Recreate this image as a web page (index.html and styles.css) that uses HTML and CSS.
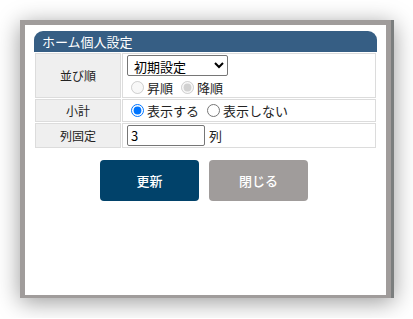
FILE: index.html
```html
<!DOCTYPE html>
<html lang="ja">
<head>
  <meta charset="UTF-8">
  <title>ホーム個人設定</title>
  <link rel="stylesheet" href="styles.css">
</head>
<body>
  <div class="dialog">
    <div class="panel">
      <div class="panel-title">ホーム個人設定</div>
      <div class="settings">
        <div class="label row-sort">並び順</div>
        <div class="value row-sort">
          <select class="sort-select">
            <option>初期設定</option>
          </select>
          <div class="radios">
            <label><input type="radio" name="order" disabled>昇順</label>
            <label><input type="radio" name="order" checked disabled>降順</label>
          </div>
        </div>
        <div class="label">小計</div>
        <div class="value">
          <div class="radios">
            <label><input type="radio" name="subtotal" checked>表示する</label>
            <label><input type="radio" name="subtotal">表示しない</label>
          </div>
        </div>
        <div class="label">列固定</div>
        <div class="value">
          <input class="col-input" type="text" value="3"> 列
        </div>
      </div>
      <div class="actions">
        <button class="btn btn-update">更新</button>
        <button class="btn btn-close">閉じる</button>
      </div>
    </div>
  </div>
</body>
</html>
```

FILE: styles.css
```css
/* page */
body {
  margin: 0;
  padding: 20px;
  background: #fff;
  font-family: "Noto Sans CJK JP", "Noto Sans", sans-serif;
  font-size: 12px;
  color: #222;
}

.dialog {
  width: 361px;
  height: 270px;
  background: #a09c9b;
  padding: 5px 5px 3px 5px;
  border-right: 3px solid #7b7e7e;
  box-shadow: 0 4px 22px rgba(0, 0, 0, 0.4);
}

.panel {
  height: 100%;
  background: #fff;
  padding: 6px 9px 0 9px;
  box-sizing: border-box;
}

.panel-title {
  height: 21px;
  line-height: 21px;
  background: #365e84;
  color: #fff;
  font-size: 13px;
  padding-left: 8px;
  border-radius: 9px 9px 0 0;
}

/* settings table */
.settings {
  display: grid;
  grid-template-columns: 86px 1fr;
  grid-template-rows: 45px 23px 25px;
  gap: 1px 1px;
  padding: 1px;
}

.label,
.value {
  border: 1px solid #dcdcdc;
  display: flex;
  align-items: center;
}

.label {
  background: #efefef;
  justify-content: center;
}

.value {
  padding-left: 4px;
}

.value.row-sort {
  flex-direction: column;
  align-items: flex-start;
  justify-content: flex-start;
  padding-top: 1px;
}

.value.row-sort .radios {
  margin-top: 2px;
}

.sort-select {
  width: 101px;
  height: 21px;
  font-family: inherit;
  font-size: 13px;
  border: 1px solid #767676;
  border-radius: 2px;
  background: #fff;
  color: #000;
  padding: 0 2px;
}

.radios {
  display: flex;
  gap: 4px;
}

.radios label {
  display: flex;
  align-items: center;
  font-size: 13px;
}

.radios input {
  margin: 0 3px 0 4px;
  width: 13px;
  height: 13px;
}

.col-input {
  width: 78px;
  height: 21px;
  box-sizing: border-box;
  border: 1px solid #767676;
  border-radius: 2px;
  font-family: inherit;
  font-size: 13px;
  padding: 0 3px;
  margin-right: 4px;
}

.value:last-child {
  font-size: 13px;
}

/* buttons */
.actions {
  display: flex;
  justify-content: center;
  gap: 10px;
  margin-top: 11px;
  padding-right: 3px;
}

.btn {
  width: 99px;
  height: 41px;
  border: none;
  border-radius: 4px;
  color: #fff;
  font-family: inherit;
  font-size: 13px;
  font-weight: 500;
}

.btn-update {
  background: #01426a;
}

.btn-close {
  background: #a09c9b;
}
```
